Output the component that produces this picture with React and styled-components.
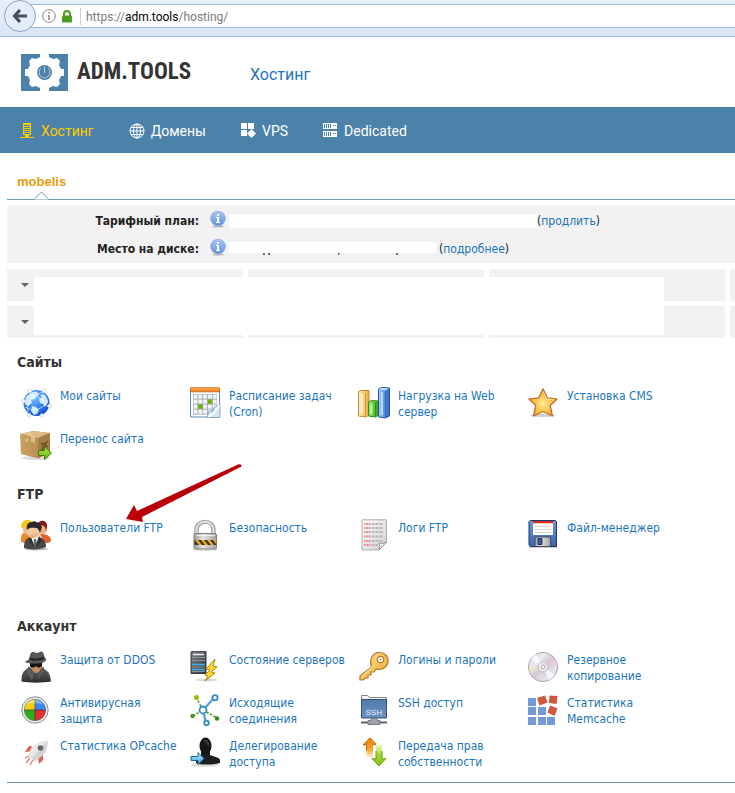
import React from "react";
import styled, { createGlobalStyle } from "styled-components";

const ui = `"DejaVu Sans Condensed", "Noto Sans", sans-serif`;
const heading = `Roboto, "Noto Sans", sans-serif`;

const GlobalStyle = createGlobalStyle`
  *, *::before, *::after { box-sizing: border-box; }
  body { margin: 0; background: #fff; color: #222; font: 12px/16px ${ui}; overflow-x: hidden; }
  a { color: #1c75bc; text-decoration: none; }
`;

const Page = styled.div`
  position: relative;
  overflow: hidden;
`;

/* ---------- browser bar ---------- */
const BrowserBar = styled.div`
  height: 37px;
  display: flex;
  align-items: flex-start;
  background: linear-gradient(#e6effa, #d9e6f6);
  border-bottom: 1px solid #a5c0dc;
`;
const BackButton = styled.button`
  flex: none;
  width: 32px;
  height: 32px;
  margin-left: 4px;
  padding: 0;
  display: grid;
  place-items: center;
  border: 1px solid #8fa5bf;
  border-radius: 50%;
  background: #e4edf8;
  z-index: 1;
`;
const AddressBar = styled.div`
  flex: 1;
  height: 24px;
  margin: 4px 0 0 -8px;
  padding-left: 14px;
  display: flex;
  align-items: center;
  gap: 5px;
  background: #fff;
  border: solid #a3bbd6;
  border-width: 1px 0;
`;
const Divider = styled.span`
  width: 1px;
  height: 17px;
  margin-left: 2px;
  background: #cfcfcf;
`;
const Url = styled.span`
  padding-top: 1px;
  font: 12px/16px ${heading};
  color: #7b7b7b;
  b { font-weight: 400; color: #000; }
`;

/* ---------- header ---------- */
const Header = styled.header`
  height: 70px;
  padding-left: 21px;
  display: flex;
  align-items: center;
`;
const Logo = styled.a`
  width: 229px;
  display: flex;
  align-items: center;
  gap: 8px;
  && { color: #333; }
  font: 700 23px/36px "Roboto Condensed", "Liberation Sans Narrow", sans-serif;
`;
const HeaderLink = styled.a`
  padding-top: 5px;
  font: 16px/24px ${heading};
`;

const Nav = styled.nav`
  height: 46px;
  padding-left: 20px;
  display: flex;
  align-items: center;
  gap: 35px;
  background: #4c82aa;
`;
const NavLink = styled.a`
  display: flex;
  align-items: center;
  gap: 6px;
  padding-top: 1px;
  font: 14px/20px ${heading};
  && { color: ${(p) => (p.$active ? "#fc0" : "#fff")}; }
`;

/* ---------- account ---------- */
const Tabs = styled.div`
  height: 47px;
  margin-left: 7px;
  padding: 19px 10px 0;
  position: relative;
  border-bottom: 1px solid #6d97b5;
`;
const Tab = styled.a`
  font: 700 13px/20px "Liberation Sans", Arial, sans-serif;
  && { color: #e79a0b; }
`;
const TabPointer = styled.svg`
  position: absolute;
  left: 27px;
  bottom: -1px;
`;
const Summary = styled.dl`
  margin: 5px 0 0 7px;
  padding: 1px 0;
  border-radius: 3px 0 0 3px;
  background: #f2f2f2;
`;
const SummaryRow = styled.div`
  height: 28px;
  padding-top: 2px;
  display: flex;
  align-items: center;
`;
const Term = styled.dt`
  width: 192px;
  margin-right: 11px;
  text-align: right;
  font-weight: 700;
`;
const Value = styled.dd`
  margin: 0;
  display: flex;
  align-items: center;
`;
const InfoMark = styled.svg`
  margin: 0 3px 4px 0;
`;
const Blank = styled.span`
  position: relative;
  width: ${(p) => p.$w}px;
  height: ${(p) => (p.$short ? 11 : 14)}px;
  margin: ${(p) => (p.$short ? "0 3px 3px 0" : "0")};
  background: #fff;
`;
const Remnant = styled.svg`
  position: absolute;
  left: 0;
  top: 100%;
`;

const Panels = styled.div`
  position: relative;
  margin: 6px 0 0 7px;
  display: grid;
  grid-template-rows: 32px 32px;
  grid-auto-flow: column;
  grid-auto-columns: 236px;
  gap: 5px;
  overflow: hidden;
`;
const Cell = styled.div`
  background: #f2f2f2;
`;
const Toggle = styled.button`
  width: 36px;
  height: 32px;
  padding: 0;
  display: grid;
  place-items: center;
  border: 0;
  background: none;
`;
const Cover = styled.div`
  position: absolute;
  left: 27px;
  top: 8px;
  width: 630px;
  height: 58px;
  background: #fff;
`;

/* ---------- sections ---------- */
const Sections = styled.main`
  margin-left: 7px;
  padding: 13px 0 2px 10px;
  border-bottom: 1px solid #6d97b5;
`;
const Title = styled.h2`
  margin: 0;
  height: 36px;
  font: 700 14px/22px ${ui};
  color: #333;
`;
const Items = styled.ul`
  list-style: none;
  margin: 0;
  padding: 0 0 0 3px;
  min-height: 96px;
  display: grid;
  grid-template-columns: repeat(auto-fill, 169px);
  grid-auto-rows: 43px;
`;
const Item = styled.a`
  display: flex;
  gap: 8px;
  padding-right: 8px;
  svg { flex: none; }
`;
const Label = styled.span`
  padding-top: 1px;
`;

/* ---------- icons ---------- */
const Pic = ({ children }) => (
  <svg width="32" height="32" viewBox="0 0 32 32" aria-hidden="true">{children}</svg>
);

const HiddenSvg = styled.svg`
  display: block;
`;
const Defs = () => (
  <HiddenSvg width="0" height="0" aria-hidden="true">
    <defs>
      <radialGradient id="globe" cx=".4" cy=".3" r=".75"><stop offset="0" stopColor="#7fc0ff" /><stop offset=".6" stopColor="#2f7ce8" /><stop offset="1" stopColor="#1249bb" /></radialGradient>
      <linearGradient id="orange" x2="0" y2="1"><stop stopColor="#ffb25e" /><stop offset="1" stopColor="#f07d1c" /></linearGradient>
      <linearGradient id="box" x2="1"><stop stopColor="#c99f62" /><stop offset="1" stopColor="#b3874a" /></linearGradient>
      <linearGradient id="green" x2="0" y2="1"><stop stopColor="#b9e84a" /><stop offset="1" stopColor="#62ad12" /></linearGradient>
      <linearGradient id="barY" x2="1"><stop stopColor="#fff0b4" /><stop offset="1" stopColor="#e9a83c" /></linearGradient>
      <linearGradient id="barG" x2="1"><stop stopColor="#a4ec74" /><stop offset="1" stopColor="#2f9c14" /></linearGradient>
      <linearGradient id="barB" x2="1"><stop stopColor="#a9d0ff" /><stop offset="1" stopColor="#2463c8" /></linearGradient>
      <radialGradient id="star" cx=".5" cy=".55"><stop stopColor="#ffec98" /><stop offset="1" stopColor="#f5a81f" /></radialGradient>
      <linearGradient id="steel" x2="1"><stop stopColor="#9b9b97" /><stop offset=".4" stopColor="#e4e4e0" /><stop offset="1" stopColor="#a2a29e" /></linearGradient>
      <linearGradient id="paper" x2="1" y2="1"><stop stopColor="#fff" /><stop offset="1" stopColor="#cfcfcf" /></linearGradient>
      <linearGradient id="floppy" x2="0" y2="1"><stop stopColor="#6d9bd8" /><stop offset="1" stopColor="#3a62aa" /></linearGradient>
      <linearGradient id="dark" x2="0" y2="1"><stop stopColor="#666" /><stop offset="1" stopColor="#2e2e2e" /></linearGradient>
      <linearGradient id="rack" x2="1" y2="1"><stop stopColor="#7d8287" /><stop offset="1" stopColor="#33373c" /></linearGradient>
      <linearGradient id="gold" x2="1" y2="1"><stop stopColor="#ffe699" /><stop offset="1" stopColor="#eda52b" /></linearGradient>
      <linearGradient id="disc" x2="1" y2="1"><stop stopColor="#d4cfd8" /><stop offset=".3" stopColor="#efebf2" /><stop offset=".5" stopColor="#d4c9d2" /><stop offset=".75" stopColor="#e6e6ec" /><stop offset="1" stopColor="#bab6c3" /></linearGradient>
      <linearGradient id="screen" x2="0" y2="1"><stop stopColor="#5079ad" /><stop offset="1" stopColor="#6f93bf" /></linearGradient>
      <linearGradient id="up" x2="0" y2="1"><stop stopColor="#e97b00" /><stop offset=".6" stopColor="#f7ab30" /><stop offset="1" stopColor="#fff4d8" /></linearGradient>
      <linearGradient id="down" x2="0" y2="1"><stop stopColor="#f6fddc" /><stop offset=".5" stopColor="#a7da2c" /><stop offset="1" stopColor="#7fc010" /></linearGradient>
      <linearGradient id="info" x2="0" y2="1"><stop stopColor="#a9c9f5" /><stop offset="1" stopColor="#648fdf" /></linearGradient>
      <linearGradient id="blueArrow" x2="0" y2="1"><stop stopColor="#bfe9ff" /><stop offset="1" stopColor="#3ba3e0" /></linearGradient>
    </defs>
  </HiddenSvg>
);

const Globe = () => (
  <Pic>
    <circle cx="16.500" cy="16" r="13" fill="url(#globe)" />
    <path d="M8 8c3-3 7-4 9-3l2 3-3 1-1 3-4 1 1 3-4 3-3-2c0-4 1-7 3-9zM20 8l4-1c2 2 4 5 4 8l-3 5-2-3-3-1-1-4 3-2zM12 19l4 1 3 3-2 4-3 1-3-4z" fill="#e2f4ff" opacity=".9" />
    <path d="M5 11c8-5 17-1 23 9M8 25C6 16 12 7 24 5M5 20c8 5 17 3 23-6" fill="none" stroke="#fff" strokeWidth=".8" opacity=".75" />
    <g fill="#fff" stroke="#b9c9e4" strokeWidth=".7"><circle cx="10" cy="4" r="1.800" /><circle cx="24" cy="4" r="1.800" /><circle cx="3.500" cy="14" r="1.800" /><circle cx="9" cy="28" r="1.800" /><circle cx="22" cy="28.500" r="1.800" /><circle cx="29.500" cy="19" r="1.800" /></g>
  </Pic>
);
const Calendar = () => (
  <Pic>
    <path d="M1.500 4h29v26h-29z" fill="#fff" stroke="#5a8bb0" />
    <path d="M1.500.8h29v4h-29z" fill="url(#orange)" stroke="#d9701c" />
    <path d="M4 7h24v20.500H4z" fill="#9ba3aa" />
    {[0, 1, 2, 3].map((r) => [0, 1, 2, 3, 4].map((c) => (
      <path key={`${r}${c}`} d={`M${4.5 + c * 4.8} ${7.5 + r * 5}h4v4.200h-4z`} fill={(r === 1 && c === 3) || (r === 2 && c === 1) ? "#6fb000" : "#f3f4f5"} />
    )))}
    <path d="M18 30.500l2-6.500 4 .5 1-4 6-3v13z" fill="#d6e6f2" stroke="#6f9dc0" strokeWidth=".8" />
    <path d="M19 30c4-2 8-6 11.500-12" fill="none" stroke="#fff" strokeWidth="1.500" />
  </Pic>
);
const Bars = () => (
  <Pic>
    <path d="M.5 4.500l2-1h8.500V28l-3 2-7.500-1z" fill="url(#barY)" stroke="#c98c35" />
    <path d="M4 7v19" stroke="#fff" strokeWidth="2.500" opacity=".7" /><path d="M7.500 6v23" stroke="#d7943a" strokeWidth=".8" />
    <path d="M10.500 15l3-1.500 7 .5v14l-3 2-7-1z" fill="url(#barG)" stroke="#2c8f1a" />
    <path d="M13.500 17v10" stroke="#dcffc4" strokeWidth="2" opacity=".7" /><path d="M17.500 16v13" stroke="#238a10" strokeWidth=".8" />
    <path d="M20.500 2l3-1.500 8 .5v28l-4 2-7-1z" fill="url(#barB)" stroke="#2456a8" />
    <path d="M21 2l3-1 7 .5-4 2z" fill="#cfe3ff" />
    <path d="M24 5v23" stroke="#d9ebff" strokeWidth="2" opacity=".7" /><path d="M27.500 4v26" stroke="#2b62bb" />
  </Pic>
);
const Star = () => (
  <Pic>
    <ellipse cx="16" cy="28.500" rx="13" ry="1.500" fill="#ccc" />
    <path d="M16 1.800l4.200 9 10 1.200-7 6.500 2.300 10.500L16 24.500l-9.500 4.500 2.300-10.500-7-6.500 10-1.200z" fill="url(#star)" stroke="#c4692b" strokeWidth="1.200" strokeLinejoin="round" />
    <path d="M16 4l3.500 8 8 1" fill="none" stroke="#fff3b8" opacity=".7" />
  </Pic>
);
const Box = () => (
  <Pic>
    <ellipse cx="16" cy="28" rx="14" ry="2" fill="#ddd" />
    <path d="M0 4l13-3 17 2v19l-12 6.500L1 24z" fill="url(#box)" />
    <path d="M0 4l13-3 17 2-12 5z" fill="#dcbb84" /><path d="M18 8l12-5v19l-12 6.500z" fill="#a37e47" />
    <path d="M5 3l5-1 5 5.500V13l-4-1V7z" fill="#ead09d" opacity=".7" /><circle cx="7" cy="10" r="1.500" fill="#e5c98f" />
    <path d="M21 14l2-1v6l-2 1M25 12v6M28 11l-3 4 3 2" fill="none" stroke="#58411f" />
    <path d="M18.500 20.500h6v-4l7 6.500-7 6.500v-4h-6z" fill="url(#green)" stroke="#3f7d0a" />
  </Pic>
);
const Users = () => (
  <Pic>
    <ellipse cx="16" cy="30" rx="12" ry="1.500" fill="#bbb" />
    <path d="M1 20c0-5 2-7 6-7l5 9-6 2-5-1z" fill="#e98a2b" />
    <path d="M3 7h8v7c-4 3-8 1-8-3z" fill="#f0b98c" />
    <path d="M1 9C1 3 4 1 7 1c4 0 5 2 6 4L6 8z" fill="#f6c31a" />
    <path d="M20 15c6 0 11 1 11 7-1 2-4 2-7 2z" fill="#e2642c" />
    <path d="M19 6h8c1 5 0 9-4 9s-4-3-4-9z" fill="#eeb285" />
    <path d="M18 5c1-4 9-5 9 2l-1 4-2-4z" fill="#8c1717" />
    <path d="M4 29c0-6 1-9 6-11h8c6 1 8 5 8 10-6 3-16 3-22 1z" fill="#45474b" />
    <path d="M10 18l5 11 5-11z" fill="#f4f4f4" /><path d="M14 20h2l1 6-2 3-1.500-3z" fill="#666" />
    <path d="M19 17l-4 12 7-8zM10 18l-1 3 6 8-4-11z" fill="#2c2d30" />
    <path d="M7 8h13c2 7-1 11-6 11-6 0-8-5-7-11z" fill="#f6c8a0" /><path d="M7 15c3 2 8 1 11-2-1 8-10 8-11 2z" fill="#e5a876" opacity=".7" />
    <path d="M7 11C6 6 8 3 12 3l2-1 2 1 4 1 2 4-2 6c-1-3-2-5-4-5-3 0-6-1-9 2z" fill="#2b2628" />
  </Pic>
);
const Lock = () => (
  <Pic>
    <ellipse cx="16" cy="30.500" rx="13" ry="1.500" fill="#ddd" />
    <path d="M7.500 18V11c0-11 17-11 17 0v7" fill="none" stroke="#8a8c88" strokeWidth="4.200" />
    <path d="M7.500 18V11c0-11 17-11 17 0v7" fill="none" stroke="#dcdeda" strokeWidth="2.400" />
    <rect x="5" y="14.500" width="22.500" height="15.500" rx="1.500" fill="url(#steel)" stroke="#7f817b" />
    <path d="M5.500 21h21.500v5H5.500z" fill="#38352c" />
    <path d="M6 21h3l4 5h-3zM12 21h3l4 5h-3zM18 21h3l4 5h-3zM24 21h3v4z" fill="#f2ac18" />
    <path d="M7 16.500h19" stroke="#fff" opacity=".7" />
  </Pic>
);
const Log = () => (
  <Pic>
    <path d="M4 .8h24.500V23l-7.500 8H4z" fill="url(#paper)" stroke="#adadad" />
    {[5, 9, 13, 17.5, 22, 26].map((y) => (
      <g key={y} strokeWidth="1.800"><path d={`M6 ${y}h7`} stroke="#ee8f8f" strokeDasharray="1.500 .6 2.500 .6" /><path d={`M14 ${y}h${y > 22 ? 6 : 11}`} stroke="#b5b5b5" strokeDasharray="2 .6 1 .5" /></g>
    ))}
    <path d="M21 31c1-3 1-5 0-7 2 1 5 0 7.500-1z" fill="#f2f2f2" stroke="#909090" />
  </Pic>
);
const Floppy = () => (
  <Pic>
    <path d="M2 28h28" stroke="#ccc" strokeWidth="2" />
    <path d="M3 1.500h25.500l1 1V27.500h-26l-1.500-1.500V2.500z" fill="url(#floppy)" stroke="#1f3769" />
    <path d="M6 3h20v13H6z" fill="#fff" /><path d="M6 2h20v2.200H6z" fill="#d42a1c" />
    <path d="M8 7.500h16M8 10.500h16M8 13.500h16" stroke="#d5d5d5" />
    <path d="M8 18h15.500v9.500H8z" fill="url(#steel)" stroke="#414a5e" /><path d="M11 19.500h4v6h-4z" fill="#3c5c98" stroke="#27385c" />
  </Pic>
);
const Spy = () => (
  <Pic>
    <path d="M1.500 30.500c0-8 1-11 8.500-13.500h11c7 2 9 5 10 13.500-8 1.500-22 1.500-29.500 0z" fill="url(#dark)" />
    <path d="M10 10h12c1 6-1 12-6 12s-6-5-6-12z" fill="#c98b5b" />
    <path d="M9 16l6 7-3 7-7-9zM23 16l-5 7-1 7 8-9z" fill="#5a5c60" stroke="#2b2d30" strokeWidth=".6" />
    <path d="M10 12h12v3c-2 2-4 2-6 0-2 2-5 2-6 0z" fill="#151515" />
    <path d="M5 10.500c2-1 4-1.500 4.500-3.500C10 3 11 .5 13.500 1L17 2l4-1.500C24 1 24 4 24.500 7l2 1c-1 4-7 4.500-11 4.500-4 0-9 0-10.500-2z" fill="#57585a" />
    <path d="M9.500 7.500c4 1.500 10 1.500 15-1" fill="none" stroke="#222" strokeWidth="2" />
  </Pic>
);
const Server = () => (
  <Pic>
    <ellipse cx="18" cy="29" rx="11" ry="1.500" fill="#d8d8d8" />
    <path d="M2 1l3-1h12v22.500H2z" fill="url(#rack)" stroke="#3a3e43" />
    <path d="M4 3.500h11" stroke="#eee" strokeWidth="1.500" /><path d="M3 6.500h13M3 9.500h13M3 16h13M3 20.500h13" stroke="#8d9399" />
    <path d="M3 13.500h13M3 18.500h13" stroke="#3fb2f2" strokeWidth="1.400" />
    <path d="M26 8l-9 10 4 1-5 5 3 1-3 5 10-8-4-1 6-5-4-1z" fill="#ffd92e" stroke="#b88a09" strokeLinejoin="round" />
  </Pic>
);
const Key = () => (
  <Pic>
    <path d="M13.500 16C10 5 18 1 22 1.500c6 .5 9 6 8 10-2 6-7 8-12 6.500l-2 3h-3v3h-3v3H7l-2 2-3 0 0-4z" fill="url(#gold)" stroke="#b2762a" strokeWidth="1.200" strokeLinejoin="round" />
    <circle cx="22.500" cy="8.500" r="3.200" fill="#fff" stroke="#b2762a" strokeWidth="1.200" /><circle cx="22.500" cy="8.500" r="1" fill="#b2762a" />
    <path d="M4 25L15 15" stroke="#fff2b5" />
  </Pic>
);
const Disc = () => (
  <Pic>
    <circle cx="16" cy="16" r="14.600" fill="url(#disc)" stroke="#aaa6b3" />
    <path d="M16 16L4 8a14 14 0 0 1 5-5zM16 16l12 8a14 14 0 0 1-6 5z" fill="#fff" opacity=".7" />
    <path d="M16 16L29 8a14 14 0 0 1 1 6z" fill="#edc8d8" opacity=".6" /><path d="M16 16L3 22a14 14 0 0 1-1-6z" fill="#efe2b6" opacity=".6" />
    <circle cx="16" cy="16" r="5" fill="#eee" stroke="#bbb" /><circle cx="16" cy="16" r="2" fill="#fff" stroke="#aaa" />
  </Pic>
);
const Antivirus = () => (
  <Pic>
    <circle cx="15" cy="16" r="13.200" fill="#ededed" stroke="#8e8e8e" /><circle cx="15" cy="16" r="11" fill="#777" />
    <path d="M15 16V5.500A10.500 10.500 0 0 0 4.500 16z" fill="#f5ce19" /><path d="M15 16V5.500A10.500 10.500 0 0 1 25.500 16z" fill="#3f87f0" />
    <path d="M15 16v10.500A10.500 10.500 0 0 1 4.500 16z" fill="#2fae1c" /><path d="M15 16v10.500A10.500 10.500 0 0 0 25.500 16z" fill="#e62e2e" />
    <path d="M15 5.500v21M4.500 16h21" stroke="#333" strokeWidth=".7" />
    <path d="M7 10c4-6 12-6 16 0-5-1-11-1-16 0z" fill="#fff" opacity=".35" />
  </Pic>
);
const Network = () => (
  <Pic>
    <g fill="none" stroke="#4c9220" strokeWidth="1.500" strokeDasharray="2.500 1.500"><path d="M7 3l7 13L4 22M14 16l14 8" /></g>
    <path d="M14 16L25 4M14 16l3 13" stroke="#4ba3d8" strokeWidth="2.200" />
    <g fill="#fff" stroke="#2f8bc5" strokeWidth="1.800"><circle cx="14" cy="16" r="3.500" /><circle cx="26" cy="3.800" r="2.600" /><circle cx="17.500" cy="29" r="2.300" /></g>
    <circle cx="7.500" cy="3.500" r="2.500" fill="#91bd13" /><circle cx="3.500" cy="22" r="2.200" fill="#4c9220" /><circle cx="28" cy="24.500" r="2.200" fill="#3b8616" />
  </Pic>
);
const Ssh = () => (
  <Pic>
    <path d="M3.500 1.500h6l2 2h17v4h-25z" fill="#f4f4f4" stroke="#888" />
    <path d="M3.500 5.500h25v18.500h-25z" fill="url(#screen)" stroke="#38516f" />
    <text x="16" y="20.500" textAnchor="middle" fontFamily="Liberation Sans, sans-serif" fontSize="8" fill="#e5eefa">SSH</text>
    <path d="M3 28.500h26" stroke="#596474" strokeWidth="2" /><path d="M13 24.500h6v2h3v4H10v-4h3z" fill="#a0a4a8" stroke="#777e87" />
  </Pic>
);
const Memcache = () => (
  <Pic>
    <path d="M1 4h8v8H1zM1 13h8v8H1zM11 13h8v8h-8zM1 23h8v8H1zM11 23h8v8h-8zM20 23h8v8h-8z" fill="#7499d9" />
    <path d="M10 4l8-2.500 2.500 7-8 3zM22.500 1.500l8 .5-1 8-7.500-1zM23 11.500l7.500 3-3 7.500-7-3.500z" fill="#cf5940" />
  </Pic>
);
const Rocket = () => (
  <Pic>
    <path d="M12 9H9l-4 6 5-.5zM18 21l1 6 4-4v-5z" fill="#df5f5d" />
    <path d="M27.500 4C19 4 14 8 10 14l-1 4 5 6 5-3c6-4 8.500-9 8.500-17z" fill="#ebe9e7" stroke="#e0dddb" strokeWidth=".6" />
    <path d="M27.500 4c0 8-2.500 13-8.500 17l-5 3-2-3z" fill="#d5d2cf" />
    <circle cx="20.500" cy="11" r="2.800" fill="#65676d" />
    <path d="M9 19l-4 2M10 21l-4 5M13 23l-3 5" stroke="#e87c79" strokeWidth="1.300" />
  </Pic>
);
const Delegate = () => (
  <Pic>
    <ellipse cx="16" cy="28" rx="14" ry="2" fill="#ddd" />
    <path d="M12 13h9v5c5 2 9 2 10 5v3c-8 2-20 2-24 0 0-5 2-6 5-8z" fill="#1d1d1d" />
    <ellipse cx="16.500" cy="9" rx="6" ry="8.500" fill="#161616" />
    <path d="M14 3c4-1 7 2 6 7l-3-4z" fill="#555" opacity=".6" />
    <path d="M2 19.500h7v-4l6 6-6 6v-4H2z" fill="url(#blueArrow)" stroke="#1d6598" />
  </Pic>
);
const Transfer = () => (
  <Pic>
    <path d="M12 .8l7 7.200-4-.5v13H8.500v-13l-3.500.5z" fill="url(#up)" /><path d="M8.500 14V7.500L5 8 12 .8 19 8l-4-.5" fill="none" stroke="#c05f08" strokeWidth=".9" />
    <path d="M18 6.500h6V22l4-.5-7 7.500-7-7.500 4 .5z" fill="url(#down)" /><path d="M24 14v8l4-.5-7 7.500-7-7.500 4 .5v-8" fill="none" stroke="#5c9410" strokeWidth=".9" />
  </Pic>
);

const LogoMark = () => (
  <svg width="48" height="37" viewBox="0 0 48 37" aria-hidden="true">
    <path d="M0 0h19v3l-4 2-4-1-3 3 1 4-2 4H4v7h3l2 4-1 4 3 3 4-1 4 2v3H0zM47 0H28v3l4 2 4-1 3 3-1 4 2 4h3v7h-3l-2 4 1 4-3 3-4-1-4 2v3h19z" fill="#4c82aa" />
    <circle cx="23.500" cy="18.500" r="7.500" fill="#4c82aa" />
    <path d="M20 14a5.500 5.500 0 1 0 7 0M23.500 12v7" fill="none" stroke="#b9d0e1" />
  </svg>
);
const HostIcon = () => (
  <svg width="15" height="16" viewBox="0 0 15 16" aria-hidden="true"><path d="M3 0h8v12H9v2h5v1H0v-1h5v-2H3z" fill="#fc0" /><path d="M4 2.500h6M4 4.500h6M4 6.500h6M4 8.500h6M4 10.500h6" stroke="#4c82aa" /></svg>
);
const WebIcon = () => (
  <svg width="16" height="16" viewBox="0 0 16 16" fill="none" stroke="#fff" aria-hidden="true"><circle cx="8" cy="8" r="7" /><ellipse cx="8" cy="8" rx="3.500" ry="7" /><path d="M8 1v14M1 8h14M2 4.500h12M2 11.500h12" /></svg>
);
const VpsIcon = () => (
  <svg width="15" height="16" viewBox="0 0 15 16" fill="#fff" aria-hidden="true"><path d="M0 0h6v6H0zM7 0h6v6H7zM0 7h6v6H0zM10.500 6L15 10.500 10.500 15 6 10.500z" /></svg>
);
const DedicatedIcon = () => (
  <svg width="15" height="15" viewBox="0 0 15 15" aria-hidden="true"><path d="M0 0h14v6H0zM0 8h14v6H0z" fill="#fff" /><path d="M1.500 1v4M3.500 1v4M5.500 1v4M7.500 1v4M1.500 9v4M3.500 9v4M5.500 9v4M7.500 9v4M10 2.500h1M12 2.500h1M10 10.500h1M12 10.500h1" stroke="#4c82aa" /></svg>
);
const InfoIcon = () => (
  <InfoMark width="16" height="17" viewBox="0 0 16 17" aria-hidden="true"><ellipse cx="8" cy="15.500" rx="6" ry="1" fill="#bbb" /><circle cx="8" cy="7.500" r="7.300" fill="url(#info)" stroke="#6d96dd" strokeWidth=".6" /><path d="M7 3h2v2H7zM6 6h3v5h1v1H6v-1h1V7H6z" fill="#fff" /></InfoMark>
);

const Pointer = styled.svg`
  position: absolute;
  left: 124px;
  top: 462px;
  pointer-events: none;
`;

const sections = [
  ["Сайты", [[Globe, "Мои сайты"], [Calendar, "Расписание задач (Cron)"], [Bars, "Нагрузка на Web сервер"], [Star, "Установка CMS"], [Box, "Перенос сайта"]]],
  ["FTP", [[Users, "Пользователи FTP"], [Lock, "Безопасность"], [Log, "Логи FTP"], [Floppy, "Файл-менеджер"]]],
  ["Аккаунт", [[Spy, "Защита от DDOS"], [Server, "Состояние серверов"], [Key, "Логины и пароли"], [Disc, "Резервное копирование"], [Antivirus, "Антивирусная защита"], [Network, "Исходящие соединения"], [Ssh, "SSH доступ"], [Memcache, "Статистика Memcache"], [Rocket, "Статистика OPcache"], [Delegate, "Делегирование доступа"], [Transfer, "Передача прав собственности"]]],
];
const navigation = [["Хостинг", HostIcon], ["Домены", WebIcon], ["VPS", VpsIcon], ["Dedicated", DedicatedIcon]];

export default function App() {
  return (
    <Page>
      <GlobalStyle />
      <Defs />
      <BrowserBar>
        <BackButton aria-label="Назад">
          <svg width="16" height="16" viewBox="0 0 16 16"><path d="M8 2L2.500 8 8 14M3 8h12" fill="none" stroke="#4b5059" strokeWidth="3.200" /></svg>
        </BackButton>
        <AddressBar>
          <svg width="14" height="14" viewBox="0 0 14 14"><circle cx="7" cy="7" r="6.300" fill="none" stroke="#858585" /><path d="M6.300 3h1.400v1.500H6.300zM6.300 6h1.400v5H6.300z" fill="#777" /></svg>
          <svg width="12" height="13" viewBox="0 0 12 13"><path d="M3 6V4a3 3 0 0 1 6 0v2" fill="none" stroke="#4b9b22" strokeWidth="2" /><rect x="1" y="5.500" width="10" height="7" rx="1" fill="#4b9b22" /></svg>
          <Divider />
          <Url>https://<b>adm.tools</b>/hosting/</Url>
        </AddressBar>
      </BrowserBar>
      <Header>
        <Logo href="#"><LogoMark />ADM.TOOLS</Logo>
        <HeaderLink href="#">Хостинг</HeaderLink>
      </Header>
      <Nav>
        {navigation.map(([label, Icon], i) => (
          <NavLink href="#" key={label} $active={i === 0}><Icon />{label}</NavLink>
        ))}
      </Nav>
      <Tabs>
        <Tab href="#">mobelis</Tab>
        <TabPointer width="16" height="9" viewBox="0 0 16 9"><path d="M0 8.500L7.500 1 15 8.500" fill="#fff" stroke="#6d97b5" /></TabPointer>
      </Tabs>
      <Summary>
        <SummaryRow>
          <Term>Тарифный план:</Term>
          <Value><InfoIcon /><Blank $w={308} /><span>(<a href="#">продлить</a>)</span></Value>
        </SummaryRow>
        <SummaryRow>
          <Term>Место на диске:</Term>
          <Value>
            <InfoIcon />
            <Blank $w={207} $short>
              <Remnant width="207" height="2" viewBox="0 0 207 2" aria-hidden="true"><path d="M34 0h1v2h-1zM39 0h1v2h-1zM109 0h1v2h-1zM167 0h1v2h-1z" fill="#a05030" /><path d="M35 0h1v2h-1zM40 0h1v2h-1zM110 0h1v1h-1zM168 0h1v2h-1z" fill="#4a7fb5" /></Remnant>
            </Blank>
            <span>(<a href="#">подробнее</a>)</span>
          </Value>
        </SummaryRow>
      </Summary>
      <Panels>
        {[0, 1, 2, 3].map((c) => [0, 1].map((r) => (
          <Cell key={`${c}${r}`}>
            {c === 0 && <Toggle aria-label="Развернуть"><svg width="8" height="4" viewBox="0 0 8 4"><path d="M0 0h8L4 4z" fill="#666" /></svg></Toggle>}
          </Cell>
        )))}
        <Cover />
      </Panels>
      <Sections>
        {sections.map(([title, items]) => (
          <section key={title}>
            <Title>{title}</Title>
            <Items>
              {items.map(([Icon, label]) => (
                <li key={label}><Item href="#"><Icon /><Label>{label}</Label></Item></li>
              ))}
            </Items>
          </section>
        ))}
      </Sections>
      <Pointer width="120" height="62" viewBox="0 0 120 62">
        <path d="M2 57L10 43l3 6L114 2.500q4-1 3.500 2L18 55l1 5z" fill="#b90008" />
      </Pointer>
    </Page>
  );
}
